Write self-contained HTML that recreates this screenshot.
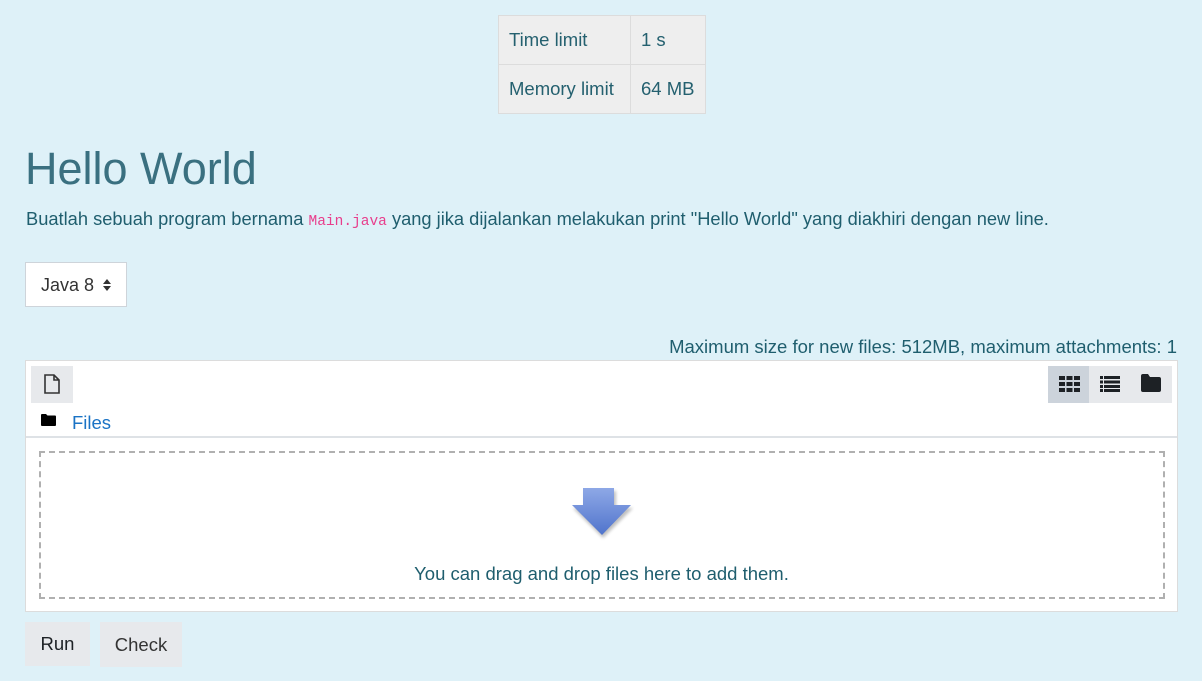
<!DOCTYPE html>
<html><head><meta charset="utf-8"><style>
*{box-sizing:border-box;margin:0;padding:0}
body{width:1202px;height:681px;background:#def1f8;font-family:"Liberation Sans",sans-serif;color:#1f5e6e;position:relative;overflow:hidden}
.a{position:absolute}
table{position:absolute;left:498px;top:15px;border-collapse:collapse;background:#eeeeee;font-size:18.5px;table-layout:fixed;width:207px}
td{border:1px solid #dcdcdc;height:49px;padding:0 10px;color:#24606f;white-space:nowrap}
h1{position:absolute;left:25px;top:143px;font-size:45px;font-weight:normal;color:#3a7080;white-space:nowrap}
.p{left:26px;top:208px;font-size:18.3px;white-space:nowrap}
code{font-family:"Liberation Mono",monospace;color:#e83e8c;font-size:14.5px}
.sel{left:25px;top:262px;width:102px;height:45px;background:#fff;border:1px solid #ced4da;font-size:18px;color:#333;padding:12px 0 0 15px;white-space:nowrap}
.fm{left:25px;top:360px;width:1153px;height:252px;background:#fff;border:1px solid #dcdcdc}
.btn{background:#e7e9ec;color:#1d2125;font-size:18.5px;text-align:center}
</style></head><body>
<table><tr><td style="width:132px">Time limit</td><td style="width:75px">1 s</td></tr>
<tr><td>Memory limit</td><td>64 MB</td></tr></table>
<h1>Hello World</h1>
<div class="a p">Buatlah sebuah program bernama <code>Main.java</code> yang jika dijalankan melakukan print "Hello World" yang diakhiri dengan new line.</div>
<div class="a sel">Java 8 <svg width="10" height="14" viewBox="0 0 10 14" style="margin-left:3px;vertical-align:-1px"><path d="M1 6L5 1L9 6Z M1 8L5 13L9 8Z" fill="#333"/></svg></div>
<div class="a" style="right:25px;top:336px;font-size:18.5px;white-space:nowrap">Maximum size for new files: 512MB, maximum attachments: 1</div>
<div class="a fm">
 <div class="a" style="left:5px;top:5px;width:42px;height:37px;background:#e7e9ec"><svg class="a" style="left:13px;top:8px" width="16" height="20" viewBox="0 0 16 20"><path d="M1 1H10L15 6V19H1Z M10 1V6H15" fill="none" stroke="#333" stroke-width="1.6"/></svg></div>
 <div class="a" style="left:1022px;top:5px;width:124px;height:37px;background:#e7e9ec"></div>
 <div class="a" style="left:1022px;top:5px;width:41px;height:37px;background:#ccd3db"></div>
 <svg class="a" style="left:1033px;top:15px" width="21" height="16" viewBox="0 0 21 16"><g fill="#1d2125"><rect x="0" y="0" width="6" height="4"/><rect x="7.5" y="0" width="6" height="4"/><rect x="15" y="0" width="6" height="4"/><rect x="0" y="6" width="6" height="4"/><rect x="7.5" y="6" width="6" height="4"/><rect x="15" y="6" width="6" height="4"/><rect x="0" y="12" width="6" height="4"/><rect x="7.5" y="12" width="6" height="4"/><rect x="15" y="12" width="6" height="4"/></g></svg>
 <svg class="a" style="left:1074px;top:15px" width="20" height="16" viewBox="0 0 20 16"><g fill="#1d2125"><rect x="0" y="0" width="3" height="3"/><rect x="4" y="0" width="16" height="3"/><rect x="0" y="4.5" width="3" height="3"/><rect x="4" y="4.5" width="16" height="3"/><rect x="0" y="9" width="3" height="3"/><rect x="4" y="9" width="16" height="3"/><rect x="0" y="13" width="3" height="3"/><rect x="4" y="13" width="16" height="3"/></g></svg>
 <svg class="a" style="left:1115px;top:13px" width="20" height="18" viewBox="0 0 20 18"><path d="M0 2Q0 0 2 0H7L9 3H18Q20 3 20 5V16Q20 18 18 18H2Q0 18 0 16Z" fill="#1d2125"/></svg>
 <svg class="a" style="left:15px;top:53px" width="15" height="12" viewBox="0 0 15 12"><path d="M0 1Q0 0 1 0H5L6.5 1.5H14Q15 1.5 15 2.5V11Q15 12 14 12H1Q0 12 0 11Z" fill="#000"/></svg>
 <div class="a" style="left:46px;top:51px;font-size:18.5px;color:#1a73c5">Files</div>
 <div class="a" style="left:0;top:75px;width:1151px;height:2px;background:#dee2e6"></div>
 <div class="a" style="left:13px;top:90px;width:1126px;height:148px;border:2px dashed #b0b0b0"></div>
 <svg class="a" style="left:543px;top:126px" width="68" height="54" viewBox="0 0 68 54"><defs><linearGradient id="g" x1="0" y1="0" x2="0" y2="1"><stop offset="0" stop-color="#8ea8e6"/><stop offset="1" stop-color="#5074cc"/></linearGradient><filter id="s"><feGaussianBlur stdDeviation="1.5"/></filter></defs><path d="M16 4H47V21H64L34 51L4 21H16Z" fill="#000" opacity=".25" filter="url(#s)"/><path d="M14 1H45V18H62L33 48L3 18H14Z" fill="url(#g)"/></svg>
 <div class="a" style="left:0;width:1151px;top:202px;text-align:center;font-size:18.5px">You can drag and drop files here to add them.</div>
</div>
<div class="a btn" style="left:25px;top:622px;width:65px;height:44px;line-height:44px">Run</div>
<div class="a btn" style="left:100px;top:622px;width:82px;height:45px;line-height:45px;color:#333">Check</div>
</body></html>
